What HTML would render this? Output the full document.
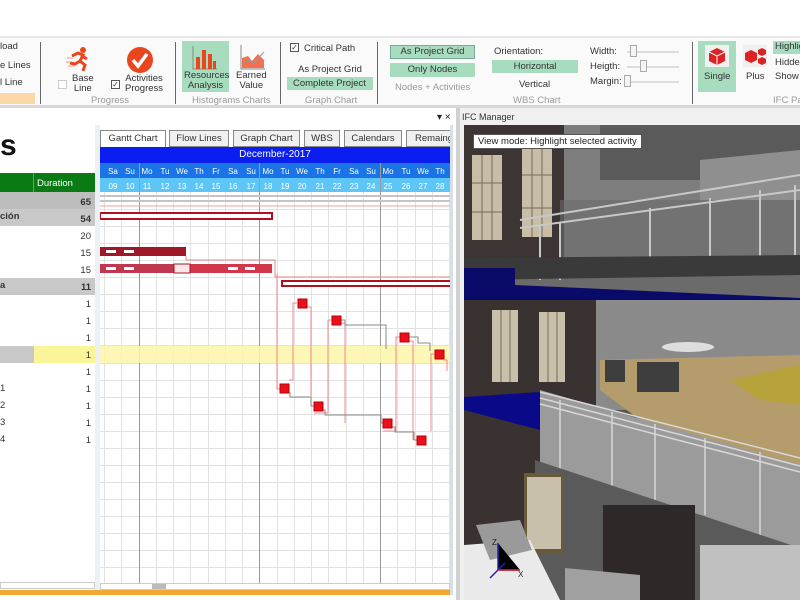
<!DOCTYPE html>
<html><head><meta charset="utf-8">
<style>
*{margin:0;padding:0;box-sizing:border-box}
body{width:800px;height:600px;overflow:hidden;background:#fff;font-family:"Liberation Sans",sans-serif;font-size:9.5px;color:#333;position:relative}
.a{position:absolute;white-space:nowrap}
.g{background:#a8dcbf}
.lbl{color:#9a9a9a}
.sep{position:absolute;width:1px;background:#666;top:42px;height:62px}
.cb{position:absolute;width:9px;height:9px;border:1px solid #555;background:#fff;font-size:8px;line-height:7px;text-align:center}
</style></head><body>
<div class="a" style="left:0;top:36px;width:800px;height:2px;background:#e6e6e6"></div>
<div class="a" style="left:0;top:38px;width:800px;height:67px;background:#fafafa"></div>
<div class="a" style="left:0;top:41px">load</div>
<div class="a" style="left:0;top:60px">e Lines</div>
<div class="a" style="left:0;top:77px">l Line</div>
<div class="a" style="left:0;top:93px;width:35px;height:11px;background:#fcd8a6"></div>
<div class="sep" style="left:40px"></div>
<svg class="a" style="left:66px;top:46px" width="26" height="26" viewBox="0 0 26 26"><circle cx="17" cy="4" r="3" fill="#e8471e"/><path d="M6 10 L12 7 L17 9 L14 15 L19 19 L17 25 M14 15 L9 18 L4 17 M16 10 L21 13" stroke="#e8471e" stroke-width="3" fill="none"/><path d="M1 12h6M0 16h5M2 20h6" stroke="#f29a7a" stroke-width="1"/></svg>
<div class="cb" style="left:58px;top:80px;border-color:#ccc"></div>
<div class="a" style="left:72px;top:74px;text-align:center;line-height:10px">Base<br>Line</div>
<svg class="a" style="left:126px;top:46px" width="28" height="28"><circle cx="14" cy="14" r="13" fill="#e8471e"/><path d="M7 14 L12 20 L21 8" stroke="#fff" stroke-width="3.5" fill="none"/></svg>
<div class="cb" style="left:111px;top:80px">✓</div>
<div class="a" style="left:125px;top:74px;text-align:center;line-height:10px">Activities<br>Progress</div>
<div class="a lbl" style="left:91px;top:95px">Progress</div>
<div class="sep" style="left:175px"></div>
<div class="a g" style="left:182px;top:41px;width:47px;height:51px"></div>
<svg class="a" style="left:192px;top:44px" width="26" height="26"><path d="M1 2v23h24" stroke="#888" fill="none"/><rect x="4" y="13" width="4" height="12" fill="#e8471e"/><rect x="10" y="6" width="4" height="19" fill="#e8471e"/><rect x="16" y="10" width="4" height="15" fill="#e8471e"/><rect x="21" y="17" width="3" height="8" fill="#e8471e"/></svg>
<div class="a" style="left:184px;top:71px;width:43px;text-align:center;line-height:10px">Resources<br>Analysis</div>
<svg class="a" style="left:240px;top:44px" width="26" height="26"><path d="M1 1v24h24" stroke="#888" fill="none"/><path d="M2 24 L2 14 L8 12 L12 17 L18 10 L24 16 L24 24Z" fill="#f07050"/><path d="M2 20 L8 16 L14 19 L24 8" stroke="#999" fill="none"/></svg>
<div class="a" style="left:236px;top:71px;text-align:center;line-height:10px">Earned<br>Value</div>
<div class="a lbl" style="left:192px;top:95px">Histograms Charts</div>
<div class="sep" style="left:280px"></div>
<div class="cb" style="left:290px;top:43px">✓</div>
<div class="a" style="left:304px;top:43px">Critical Path</div>
<div class="a" style="left:298px;top:64px">As Project Grid</div>
<div class="a g" style="left:287px;top:77px;width:86px;height:13px;padding-left:6px;line-height:13px">Complete Project</div>
<div class="a lbl" style="left:305px;top:95px">Graph Chart</div>
<div class="sep" style="left:377px"></div>
<div class="a g" style="left:390px;top:45px;width:85px;height:14px;border:1px solid #7a9;text-align:center;line-height:12px">As Project Grid</div>
<div class="a g" style="left:390px;top:63px;width:85px;height:14px;text-align:center;line-height:14px">Only Nodes</div>
<div class="a lbl" style="left:395px;top:82px">Nodes + Activities</div>
<div class="a" style="left:494px;top:46px">Orientation:</div>
<div class="a g" style="left:492px;top:60px;width:86px;height:13px;text-align:center;line-height:13px">Horizontal</div>
<div class="a" style="left:519px;top:79px">Vertical</div>
<div class="a lbl" style="left:513px;top:95px">WBS Chart</div>
<div class="a" style="left:590px;top:46px">Width:</div>
<div class="a" style="left:590px;top:61px">Heigth:</div>
<div class="a" style="left:590px;top:76px">Margin:</div>
<div class="a" style="left:627px;top:51px;width:52px;height:2px;background:#ddd"></div>
<div class="a" style="left:627px;top:66px;width:52px;height:2px;background:#ddd"></div>
<div class="a" style="left:627px;top:81px;width:52px;height:2px;background:#ddd"></div>
<div class="a" style="left:630px;top:45px;width:7px;height:12px;background:#f4f4f4;border:1px solid #aaa"></div>
<div class="a" style="left:640px;top:60px;width:7px;height:12px;background:#f4f4f4;border:1px solid #aaa"></div>
<div class="a" style="left:624px;top:75px;width:7px;height:12px;background:#f4f4f4;border:1px solid #aaa"></div>
<div class="sep" style="left:692px"></div>
<div class="a g" style="left:698px;top:41px;width:38px;height:51px"></div>
<svg class="a" style="left:705px;top:45px" width="24" height="22"><rect x="0" y="0" width="24" height="22" fill="#f0f0f0"/><path d="M12 3 L20 7 L20 16 L12 20 L4 16 L4 7Z" fill="#d22"/><path d="M4 7 L12 11 L20 7 M12 11 V20" stroke="#fff" fill="none"/></svg>
<div class="a" style="left:704px;top:71px">Single</div>
<svg class="a" style="left:743px;top:45px" width="24" height="22"><rect x="0" y="0" width="24" height="22" fill="#f0f0f0"/><path d="M8 5 L14 8 L14 15 L8 18 L2 15 L2 8Z" fill="#d22"/><path d="M19 3 L23 5 L23 9 L19 11 L15 9 L15 5Z M19 12 L23 14 L23 18 L19 20 L15 18 L15 14Z" fill="#d22"/></svg>
<div class="a" style="left:746px;top:71px">Plus</div>
<div class="a g" style="left:773px;top:41px;width:27px;height:13px;padding-left:2px">Highlig</div>
<div class="a" style="left:775px;top:57px">Hidde</div>
<div class="a" style="left:775px;top:71px">Show</div>
<div class="a lbl" style="left:773px;top:95px">IFC Par</div>
<div class="a" style="left:0;top:105px;width:800px;height:3px;background:#d8d8d8"></div>

<div class="a" style="left:0;top:108px;width:456px;height:492px;background:#fff"></div>
<div class="a" style="left:437px;top:112px;font-size:10px;color:#222">▾ ×</div>
<div class="a" style="left:450px;top:125px;width:3px;height:470px;background:#d7e0e6"></div>
<div class="a" style="left:0;top:128px;font-size:30px;font-weight:bold;color:#111;line-height:36px">s</div>
<div class="a" style="left:0;top:173px;width:95px;height:20px;background:#0a7a14"></div>
<div class="a" style="left:33px;top:173px;width:1px;height:20px;background:#4a9"></div>
<div class="a" style="left:37px;top:178px;color:#fff">Duration</div>
<div class="a" style="left:0;top:192px;width:95px;height:17px;background:#bdbdbd"></div>
<div class="a" style="left:0;top:209px;width:95px;height:17px;background:#c8c8c8"></div>
<div class="a" style="left:0;top:278px;width:95px;height:17px;background:#c8c8c8"></div>
<div class="a" style="left:0;top:346px;width:34px;height:17px;background:#c8c8c8"></div>
<div class="a" style="left:34px;top:346px;width:61px;height:17px;background:#fbf59a"></div>
<div class="a" style="left:0;top:211px;font-weight:bold">ción</div>
<div class="a" style="left:0;top:280px;font-weight:bold">a</div>
<div class="a" style="left:0;top:383px">1</div><div class="a" style="left:0;top:400px">2</div><div class="a" style="left:0;top:417px">3</div><div class="a" style="left:0;top:434px">4</div>
<div class="a" style="left:50px;top:194px;width:41px;text-align:right;line-height:17px">
<b>65</b><br><b>54</b><br>20<br>15<br>15<br><b>11</b><br>1<br>1<br>1<br>1<br>1<br>1<br>1<br>1<br>1</div>
<div class="a" style="left:0;top:582px;width:95px;height:7px;border:1px solid #ccc"></div>
<div class="a" style="left:95px;top:125px;width:5px;height:465px;background:#eef1f3"></div>
<div class="a" style="left:100px;top:130px;width:66px;height:18px;border:1px solid #888;border-bottom:none;background:#fff;text-align:center;line-height:16px">Gantt Chart</div>
<div class="a" style="left:169px;top:130px;width:60px;height:17px;border:1px solid #888;background:#f0f0f0;text-align:center;line-height:15px">Flow Lines</div>
<div class="a" style="left:233px;top:130px;width:67px;height:17px;border:1px solid #888;background:#f0f0f0;text-align:center;line-height:15px">Graph Chart</div>
<div class="a" style="left:304px;top:130px;width:36px;height:17px;border:1px solid #888;background:#f0f0f0;text-align:center;line-height:15px">WBS</div>
<div class="a" style="left:344px;top:130px;width:58px;height:17px;border:1px solid #888;background:#f0f0f0;text-align:center;line-height:15px">Calendars</div>
<div class="a" style="left:406px;top:130px;width:44px;height:17px;border:1px solid #888;border-right:none;background:#f0f0f0;padding-left:8px;line-height:15px;overflow:hidden">Remaing</div>
<div class="a" style="left:100px;top:147px;width:350px;height:16px;background:#0a1ef0;color:#fff;text-align:center;line-height:16px;font-size:10px">December-2017</div>
<svg class="a" style="left:100px;top:163px" width="350" height="430">
<rect x="0" y="0" width="350" height="15" fill="#1b74e6"/>
<rect x="0" y="15" width="350" height="14" fill="#5ec6f6"/>
<g font-family="Liberation Sans" font-size="8" fill="#fff" text-anchor="middle">
<text x="13" y="11">Sa</text><text x="30" y="11">Su</text><text x="47" y="11">Mo</text><text x="65" y="11">Tu</text><text x="82" y="11">We</text><text x="99" y="11">Th</text><text x="116" y="11">Fr</text><text x="133" y="11">Sa</text><text x="151" y="11">Su</text><text x="168" y="11">Mo</text><text x="185" y="11">Tu</text><text x="202" y="11">We</text><text x="220" y="11">Th</text><text x="237" y="11">Fr</text><text x="254" y="11">Sa</text><text x="271" y="11">Su</text><text x="288" y="11">Mo</text><text x="306" y="11">Tu</text><text x="323" y="11">We</text><text x="340" y="11">Th</text>
<text x="13" y="26">09</text><text x="30" y="26">10</text><text x="47" y="26">11</text><text x="65" y="26">12</text><text x="82" y="26">13</text><text x="99" y="26">14</text><text x="116" y="26">15</text><text x="133" y="26">16</text><text x="151" y="26">17</text><text x="168" y="26">18</text><text x="185" y="26">19</text><text x="202" y="26">20</text><text x="220" y="26">21</text><text x="237" y="26">22</text><text x="254" y="26">23</text><text x="271" y="26">24</text><text x="288" y="26">25</text><text x="306" y="26">26</text><text x="323" y="26">27</text><text x="340" y="26">28</text>
</g>
<g stroke="#e2e2e2" stroke-width="1">
<path d="M4.5 29V420M21.5 29V420M56.5 29V420M73.5 29V420M90.5 29V420M108.5 29V420M125.5 29V420M142.5 29V420M177.5 29V420M194.5 29V420M211.5 29V420M228.5 29V420M246.5 29V420M263.5 29V420M297.5 29V420M315.5 29V420M332.5 29V420M349.5 29V420"/>
<path d="M0 46.5H350M0 63.5H350M0 80.5H350M0 97.5H350M0 114.5H350M0 131.5H350M0 148.5H350M0 165.5H350M0 182.5H350M0 200.5H350M0 217.5H350M0 234.5H350M0 251.5H350M0 268.5H350M0 285.5H350M0 302.5H350M0 319.5H350M0 336.5H350M0 353.5H350M0 370.5H350M0 387.5H350M0 404.5H350"/>
</g>
<path d="M39.5 0V420M159.5 0V420M280.5 0V420" stroke="#9a9a9a"/>
<rect x="0" y="183" width="350" height="17" fill="#fdf6a8" opacity=".85"/>
<rect x="0" y="32" width="350" height="2" fill="#c4c4c4"/><rect x="0" y="37" width="350" height="2" fill="#c4c4c4"/>
<path d="M0 43H350" stroke="#e9a0a0"/>
<rect x="0" y="50" width="172" height="6" fill="#fff" stroke="#b01020" stroke-width="2"/>
<rect x="0" y="84" width="86" height="9" fill="#a01828"/>
<rect x="6" y="87" width="10" height="3" fill="#fff"/><rect x="24" y="87" width="10" height="3" fill="#fff"/>
<rect x="0" y="101" width="172" height="9" fill="#d0384a"/><rect x="0" y="101" width="74" height="9" fill="#c03850"/>
<rect x="74" y="101" width="16" height="9" fill="#fbe6ea" stroke="#a01828"/>
<rect x="6" y="104" width="10" height="3" fill="#fff"/><rect x="24" y="104" width="10" height="3" fill="#fff"/><rect x="128" y="104" width="10" height="3" fill="#fff"/><rect x="145" y="104" width="10" height="3" fill="#fff"/>
<path d="M86 93V97H175V110M175 110V114H350" stroke="#e98a8a" fill="none"/>
<rect x="182" y="118" width="170" height="5" fill="#fff" stroke="#b01020" stroke-width="2"/>
<g stroke="#e88" fill="none" stroke-width="1">
<path d="M177 111V226H180"/>
<path d="M197 140H193V217H189"/>
<path d="M207 144H211V233"/>
<path d="M232 157H228V250H214"/>
<path d="M241 160H245V260"/>
<path d="M300 174H296V268H283"/>
<path d="M309 178H313V277"/>
<path d="M335 191H331V268"/>
<path d="M344 197H347V208"/>
</g>
<g stroke="#888" fill="none"><path d="M189 230H190V234H211V243H214M223 247H225V252H281V260H283M241 157H245V162H286V186M292 264H295V269H314V277H317M309 174H318V180H330V188"/></g>
<g fill="#e8101c" stroke="#b00">
<rect x="198" y="136" width="9" height="9"/><rect x="232" y="153" width="9" height="9"/><rect x="300" y="170" width="9" height="9"/><rect x="335" y="187" width="9" height="9"/>
<rect x="180" y="221" width="9" height="9"/><rect x="214" y="239" width="9" height="9"/><rect x="283" y="256" width="9" height="9"/><rect x="317" y="273" width="9" height="9"/>
</g>
</svg>
<div class="a" style="left:100px;top:583px;width:350px;height:7px;border:1px solid #ccc;background:#fff"></div>
<div class="a" style="left:152px;top:584px;width:14px;height:5px;background:#bbb"></div>
<div class="a" style="left:0;top:590px;width:450px;height:5px;background:#f0a830"></div>

<div class="a" style="left:456px;top:108px;width:4px;height:492px;background:#d0d0d0"></div>
<div class="a" style="left:460px;top:108px;width:340px;height:492px;background:#f0f0f0"></div>
<div class="a" style="left:462px;top:112px;font-size:9px;color:#333">IFC Manager</div>
<svg class="a" style="left:464px;top:125px" width="336" height="475" viewBox="464 125 336 475">
<rect x="464" y="125" width="336" height="475" fill="#6b6b6b"/>
<rect x="560" y="125" width="240" height="140" fill="#7d7d7d"/>
<rect x="600" y="125" width="200" height="55" fill="#5a5a5a"/>
<polygon points="700,160 800,150 800,200 700,200" fill="#8f8f8f"/>
<rect x="464" y="125" width="100" height="145" fill="#3d3533"/>
<rect x="472" y="155" width="30" height="85" fill="#c8bea8"/><rect x="522" y="145" width="30" height="92" fill="#c8bea8"/>
<path d="M482 155V240M492 155V240M472 183H502M472 212H502M532 145V237M542 145V237M522 175H552M522 208H552" stroke="#7a6a55"/>
<rect x="560" y="200" width="240" height="60" fill="#6a6a6a" opacity=".6"/>
<path d="M520 220L800 175M520 228L800 190M540 226V280M560 222V280M650 208V275M710 198V275M760 190V275M795 185V275" stroke="#c8c8c8" stroke-width="2" fill="none"/>
<polygon points="464,258 800,255 800,275 464,280" fill="#3a3a3a"/>
<polygon points="464,268 515,268 515,285 800,298 800,322 464,305" fill="#0a0a68"/>
<polygon points="464,305 800,322 800,600 464,600" fill="#555"/>
<rect x="464" y="300" width="150" height="300" fill="#3a3230"/>
<rect x="492" y="310" width="26" height="72" fill="#c8c0aa"/><rect x="539" y="312" width="26" height="70" fill="#c8c0aa"/>
<path d="M501 310V382M510 310V382M548 312V382M557 312V382" stroke="#7a6a55"/>
<rect x="596" y="300" width="204" height="110" fill="#8a8a8a"/>
<polygon points="600,360 800,355 800,470 640,420 600,390" fill="#b59c6c"/>
<polygon points="730,380 800,365 800,405 760,400" fill="#b7a23c"/>
<ellipse cx="688" cy="347" rx="26" ry="5" fill="#ddd"/>
<rect x="637" y="362" width="42" height="30" fill="#3e3e3e"/><rect x="605" y="360" width="20" height="22" fill="#3e3e3e"/>
<polygon points="464,397 540,392 590,420 540,430 464,410" fill="#0a0a88"/>
<polygon points="540,390 800,465 800,555 540,470" fill="#9b9b9b"/>
<path d="M540 392L800 458M540 398L800 466M540 404L800 472M560 400V475M612 412V490M655 424V505M705 438V515M760 452V535" stroke="#d8d8d8" stroke-width="1.5" fill="none"/>
<polygon points="535,460 800,548 800,600 535,600" fill="#5a5a5a"/>
<rect x="603" y="505" width="92" height="95" fill="#2e2828"/>
<rect x="700" y="545" width="100" height="55" fill="#c0c0c0"/>
<rect x="524" y="473" width="40" height="80" fill="#6a5a3c"/><rect x="527" y="477" width="34" height="72" fill="#c8c0aa"/>
<polygon points="464,545 530,540 560,600 464,600" fill="#eaeaea"/>
<polygon points="476,525 520,520 532,550 490,560" fill="#9a9a9a"/>
<polygon points="565,568 640,575 640,600 565,600" fill="#a0a0a0"/>
<path d="M498 543V570H520M498 570L490 578M498 570L505 563" stroke="#22a" stroke-width="1.5"/>
<path d="M498 570H520" stroke="#d22" stroke-width="1.5"/>
<text x="492" y="545" font-size="8" fill="#222" font-family="Liberation Sans">Z</text>
<text x="518" y="577" font-size="8" fill="#222" font-family="Liberation Sans">X</text>
</svg>
<div class="a" style="left:473px;top:134px;background:#fff;border:1px solid #555;padding:1px 4px;font-size:9.5px;color:#222">View mode: Highlight selected activity</div>
</body></html>
